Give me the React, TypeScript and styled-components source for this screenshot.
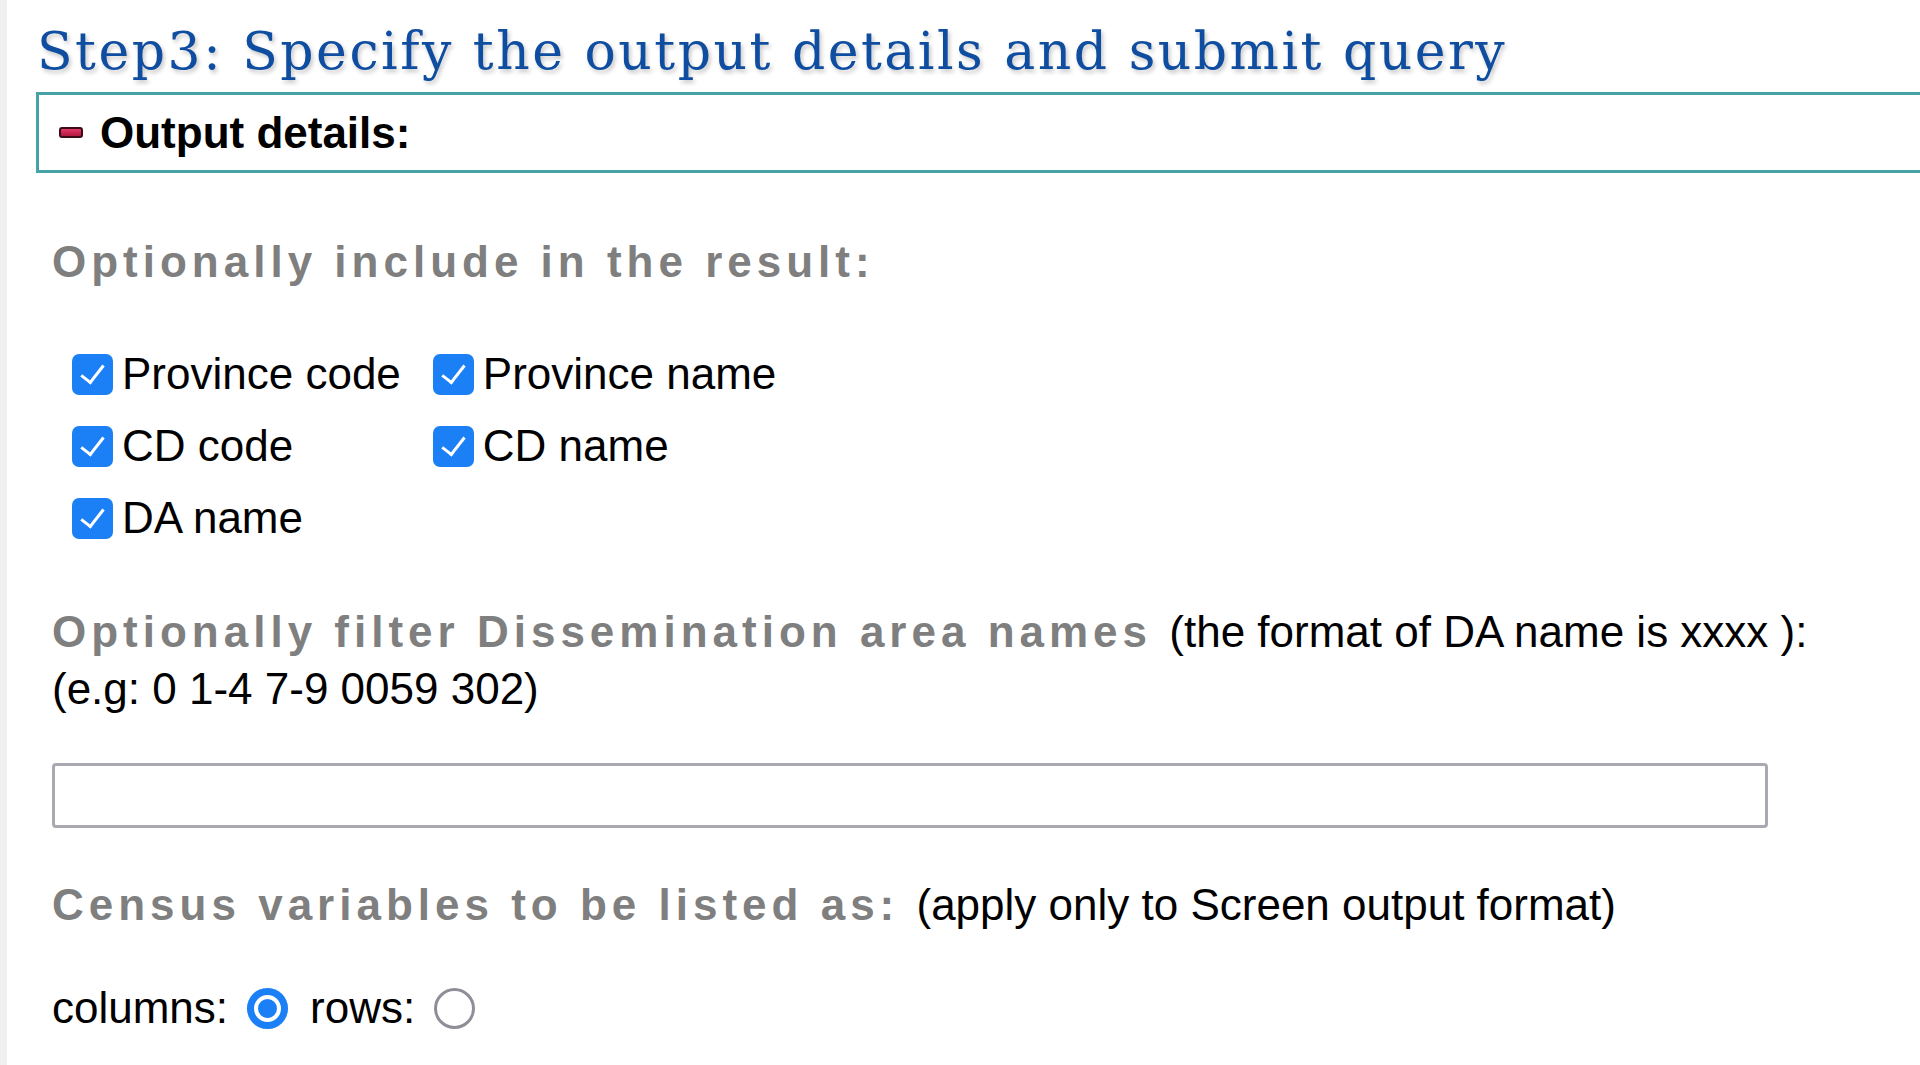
import React from "react";
import styled, { createGlobalStyle, css } from "styled-components";

const GlobalStyle = createGlobalStyle`
  html, body {
    margin: 0;
    padding: 0;
    background: #ffffff;
  }
  body {
    font-family: "Liberation Sans", Arial, Helvetica, sans-serif;
    color: #000;
    overflow: hidden;
  }
`;

const Page = styled.div`
  box-sizing: border-box;
  min-height: 1065px;
  border-left: 7px solid #f0f0f0;
  padding-left: 29px;
  overflow: hidden;
`;

const Title = styled.h1`
  margin: 0;
  padding: 16px 0 0 1px;
  font-family: "DejaVu Serif", "Liberation Serif", serif;
  font-weight: normal;
  font-size: 52px;
  line-height: 70px;
  letter-spacing: 2.5px;
  color: #0f4da1;
  text-shadow: 2px 3px 4px rgba(0, 0, 0, 0.22);
  white-space: nowrap;
`;

const Panel = styled.div`
  box-sizing: border-box;
  margin-top: 6px;
  width: calc(100% + 60px);
  height: 81px;
  border: 3px solid #45a2a7;
  display: flex;
  align-items: center;
  gap: 17px;
  padding-left: 20px;
`;

const MinusIcon = styled.span`
  box-sizing: border-box;
  width: 24px;
  height: 11px;
  border-radius: 3px;
  border: 2px solid #3d0a18;
  background: linear-gradient(#e4386a, #b5173f);
`;

const PanelTitle = styled.span`
  font-weight: bold;
  font-size: 44px;
  line-height: 49px;
`;

const Content = styled.div`
  padding-left: 16px;
`;

const mutedText = css`
  font-weight: bold;
  letter-spacing: 5px;
  color: #7f7f7f;
`;

const Heading = styled.p<{ $top: number }>`
  ${mutedText};
  margin: ${(p) => p.$top}px 0 0;
  font-size: 44px;
  line-height: 50px;
  white-space: nowrap;
`;

const Muted = styled.span`
  ${mutedText};
`;

const Para = styled.p<{ $top: number; $lh: number }>`
  margin: ${(p) => p.$top}px 0 0;
  font-size: 44px;
  line-height: ${(p) => p.$lh}px;
  white-space: nowrap;
`;

const CheckGrid = styled.div`
  display: grid;
  grid-template-columns: auto auto;
  justify-content: start;
  column-gap: 32px;
  row-gap: 22px;
  margin-top: 62px;
  padding-left: 20px;
`;

const CheckItem = styled.label`
  display: flex;
  align-items: center;
  gap: 9px;
  font-size: 44px;
  line-height: 50px;
  white-space: nowrap;
`;

const Checkbox = styled.input.attrs({ type: "checkbox" })`
  appearance: none;
  -webkit-appearance: none;
  position: relative;
  flex: none;
  width: 41px;
  height: 41px;
  margin: 0;
  border-radius: 7px;
  background: #1b7ff6;

  &::after {
    content: "";
    position: absolute;
    left: 14px;
    top: 6px;
    width: 10px;
    height: 20px;
    border-right: 3.5px solid #fff;
    border-bottom: 3.5px solid #fff;
    transform: rotate(38deg);
  }
`;

const TextInput = styled.input.attrs({ type: "text" })`
  display: block;
  box-sizing: border-box;
  margin-top: 46px;
  width: 1716px;
  height: 65px;
  border: 3px solid #a9a9b1;
  border-radius: 4px;
  background: #fff;
  font-size: 40px;
  font-family: "Liberation Sans", Arial, sans-serif;
  outline: none;
`;

const RadioRow = styled.div`
  display: flex;
  align-items: center;
  margin-top: 53px;
  font-size: 44px;
  line-height: 50px;
`;

const Radio = styled.input.attrs({ type: "radio" })`
  appearance: none;
  -webkit-appearance: none;
  box-sizing: border-box;
  flex: none;
  width: 41px;
  height: 41px;
  margin: 0 0 0 19px;
  border-radius: 50%;
  border: 3px solid #8e8e98;
  background: #fff;

  &:checked {
    border: none;
    background: #1b7ff6;
    box-shadow: inset 0 0 0 7px #1b7ff6, inset 0 0 0 11px #fff;
  }
`;

const RadioLabel = styled.span<{ $gap: number }>`
  margin-left: ${(p) => p.$gap}px;
`;

const checks = [
  { label: "Province code" },
  { label: "Province name" },
  { label: "CD code" },
  { label: "CD name" },
  { label: "DA name" },
];

export default function App() {
  return (
    <Page>
      <GlobalStyle />
      <Title>Step3: Specify the output details and submit query</Title>
      <Panel>
        <MinusIcon />
        <PanelTitle>Output details:</PanelTitle>
      </Panel>
      <Content>
        <Heading $top={64}>Optionally include in the result:</Heading>
        <CheckGrid>
          {checks.map((c) => (
            <CheckItem key={c.label}>
              <Checkbox defaultChecked />
              {c.label}
            </CheckItem>
          ))}
        </CheckGrid>
        <Para $top={60} $lh={57}>
          <Muted>Optionally filter Dissemination area names </Muted>(the format of DA name is xxxx ):
          <br />
          (e.g: 0 1-4 7-9 0059 302)
        </Para>
        <TextInput />
        <Para $top={52} $lh={50}>
          <Muted>Census variables to be listed as: </Muted>(apply only to Screen output format)
        </Para>
        <RadioRow>
          <span>columns:</span>
          <Radio name="listas" defaultChecked />
          <RadioLabel $gap={22}>rows:</RadioLabel>
          <Radio name="listas" />
        </RadioRow>
      </Content>
    </Page>
  );
}
